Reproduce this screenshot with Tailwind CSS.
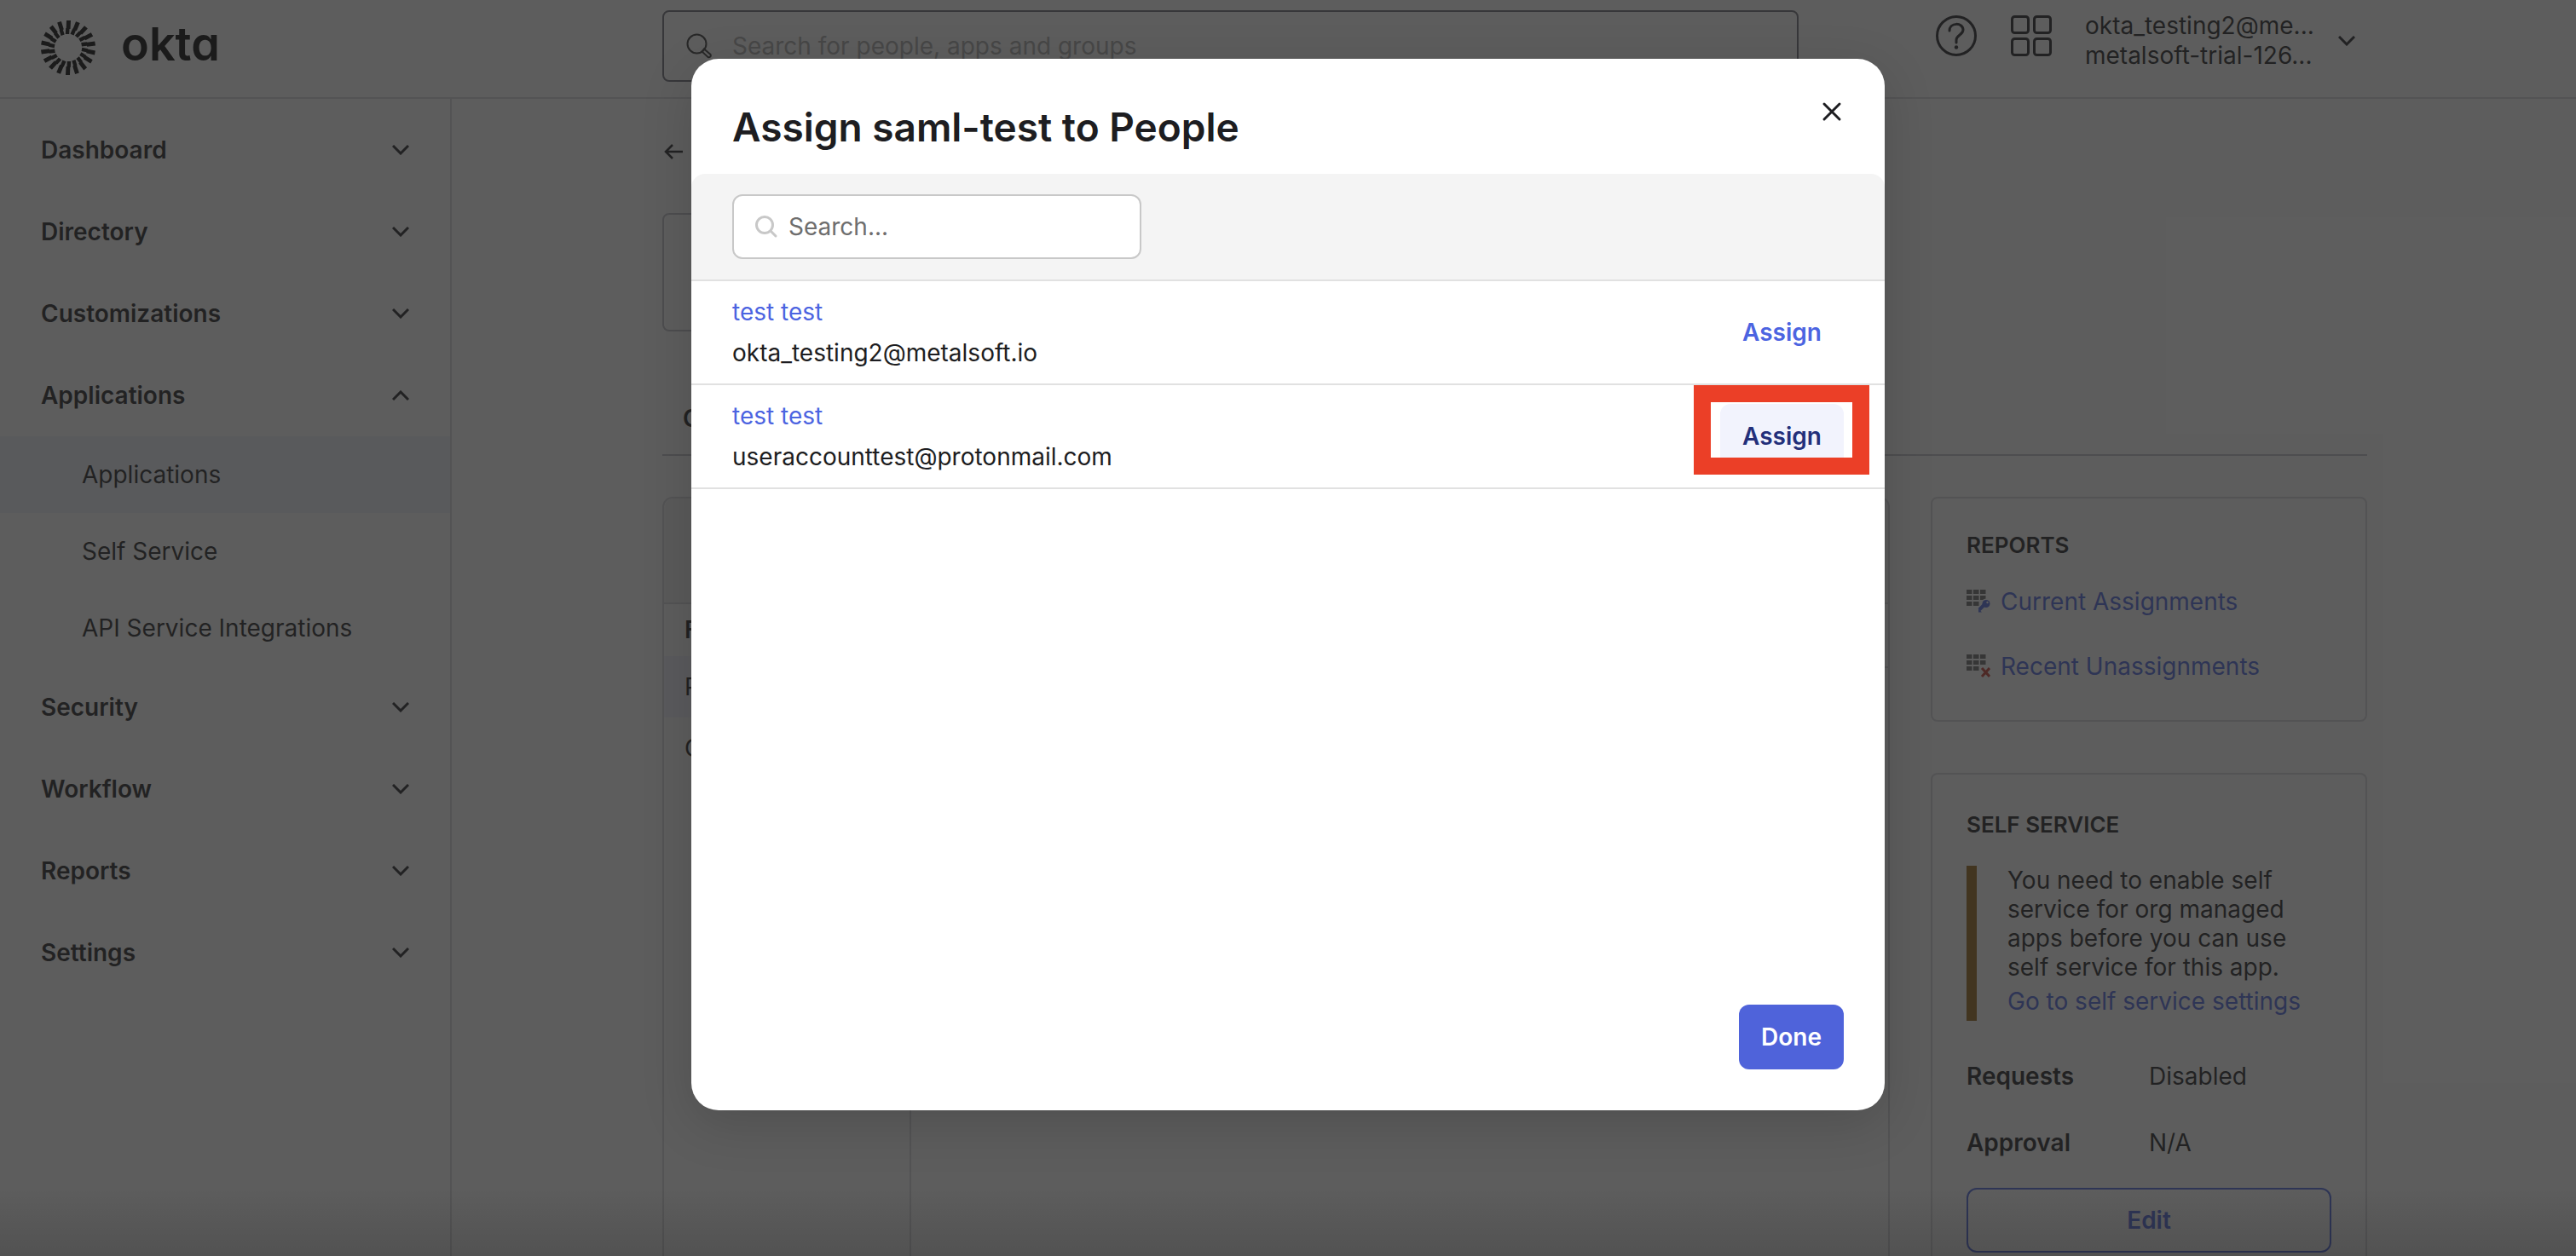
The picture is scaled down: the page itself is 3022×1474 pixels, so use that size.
<!DOCTYPE html>
<html lang="en">
<head>
<meta charset="utf-8">
<title>Okta Admin - Assign saml-test to People</title>
<script src="https://cdn.jsdelivr.net/npm/@tailwindcss/browser@4"></script>
</head>
<body class="relative h-screen overflow-hidden bg-white font-['Inter',sans-serif] text-[28px] leading-[34px] text-[#1d1d21]">
<svg class="hidden">
  <symbol id="down" viewBox="0 0 20 12"><path d="M1 1l9 9 9-9" fill="none" stroke="currentColor" stroke-width="3"/></symbol>
  <symbol id="grid" viewBox="0 0 28 28"><path d="M0 0h6.500v5H0zM8 0h6.500v5H8zM16 0h6.500v5H16zM0 7h6.500v5H0zM8 7h6.500v5H8zM16 7h6.500v5H16zM0 14h6.500v5H0zM8 14h6.500v5H8z" fill="#6a6a6a"/></symbol>
</svg>
<div class="flex h-full flex-col overflow-hidden">
  <header class="flex h-[116px] shrink-0 items-start border-b-2 border-[#d7d7dc]">
    <a href="#" class="flex w-[777px] shrink-0 items-center gap-[30px] pt-[22px] pl-12 text-black" aria-label="okta">
      <svg id="mark" class="h-16 w-16" viewBox="-32 -32 64 64" fill="currentColor"></svg>
      <span class="pb-2 font-['Inter',sans-serif] text-[54px] leading-[60px] font-semibold [font-feature-settings:'cv11']">okta</span>
    </a>
    <label class="mt-3 flex h-[84px] min-w-0 flex-1 items-center rounded-lg border-2 border-[#6e6e78] pl-[26px]">
      <svg class="mr-6 h-[30px] w-[30px] shrink-0 text-[#333]" viewBox="0 0 30 30" fill="none" stroke="currentColor" stroke-width="2"><circle cx="12.500" cy="12.500" r="11"/><path d="M18.500 21.500l2.500-3 7.500 6.500c1 2-1 4-3 3z"/></svg>
      <input class="w-full outline-none placeholder:text-[#aaa]" placeholder="Search for people, apps and groups" aria-label="Search for people, apps and groups">
    </label>
    <div class="flex w-[912px] shrink-0 items-start pt-[5px] pl-[161px]">
      <button class="mt-[13px] mr-10" aria-label="Help"><svg class="h-12 w-12" viewBox="0 0 48 48" fill="none" stroke="currentColor" stroke-width="3"><circle cx="24" cy="24" r="22.500"/><path d="M16 18c0-10 16-10 16-1 0 6-8 6-8 12v3" stroke-linecap="round"/><circle cx="24" cy="37.500" r="2.200" fill="currentColor" stroke="none"/></svg></button>
      <button class="mt-[13px] mr-[39px]" aria-label="Apps"><svg class="h-12 w-12" viewBox="0 0 48 48" fill="none" stroke="currentColor" stroke-width="3"><rect x="1.500" y="1.500" width="19" height="19" rx="3"/><rect x="27.500" y="1.500" width="19" height="19" rx="3"/><rect x="1.500" y="27.500" width="19" height="19" rx="3"/><rect x="27.500" y="27.500" width="19" height="19" rx="3"/></svg></button>
      <button class="flex items-center gap-7 pt-2 text-left leading-[35px]"><span>okta_testing2@me...<br>metalsoft-trial-126...</span><svg class="h-3 w-5"><use href="#down"/></svg></button>
    </div>
  </header>
  <div class="flex min-h-0 flex-1">
    <nav class="w-[530px] shrink-0 border-r-2 border-[#d7d7dc] pt-3 font-semibold">
      <button class="flex h-24 w-full items-center justify-between pr-12 pl-12">Dashboard<svg class="h-3 w-5"><use href="#down"/></svg></button>
      <button class="flex h-24 w-full items-center justify-between pr-12 pl-12">Directory<svg class="h-3 w-5"><use href="#down"/></svg></button>
      <button class="flex h-24 w-full items-center justify-between pr-12 pl-12">Customizations<svg class="h-3 w-5"><use href="#down"/></svg></button>
      <button class="flex h-24 w-full items-center justify-between pr-12 pl-12">Applications<svg class="h-3 w-5 rotate-180"><use href="#down"/></svg></button>
      <a href="#" class="flex h-[90px] items-center bg-[#f0f3fa] pl-24 font-normal">Applications</a>
      <a href="#" class="flex h-[90px] items-center pl-24 font-normal">Self Service</a>
      <a href="#" class="flex h-[90px] items-center pl-24 font-normal">API Service Integrations</a>
      <button class="flex h-24 w-full items-center justify-between pr-12 pl-12">Security<svg class="h-3 w-5"><use href="#down"/></svg></button>
      <button class="flex h-24 w-full items-center justify-between pr-12 pl-12">Workflow<svg class="h-3 w-5"><use href="#down"/></svg></button>
      <button class="flex h-24 w-full items-center justify-between pr-12 pl-12">Reports<svg class="h-3 w-5"><use href="#down"/></svg></button>
      <button class="flex h-24 w-full items-center justify-between pr-12 pl-12">Settings<svg class="h-3 w-5"><use href="#down"/></svg></button>
    </nav>
    <main class="flex min-w-0 flex-1 flex-col pr-[245px] pl-[247px]">
      <a href="#" class="mt-[53px] ml-0.5 w-6" aria-label="Back"><svg class="h-[18px] w-[22px]" viewBox="0 0 22 18" fill="none" stroke="currentColor" stroke-width="2.500"><path d="M22 9H2M10 1L2 9l8 8"/></svg></a>
      <div class="mt-[63px] h-[139px] w-36 shrink-0 rounded-lg border-2 border-[#c1c1c8]"></div>
      <div class="mt-[67px] h-[79px] shrink-0 border-b-2 border-[#c1c1c8] pt-[18px] pl-6 font-semibold">General</div>
      <div class="mt-12 flex min-h-0 flex-1 gap-12">
        <section class="flex min-w-0 flex-1 flex-col rounded-t-xl border-2 border-b-0 border-[#d7d7dc]">
          <div class="h-[124px] shrink-0 rounded-t-xl border-b-2 border-[#d7d7dc] bg-[#f4f4f4]"></div>
          <div class="flex flex-1">
            <div class="w-[290px] border-r-2 border-[#d7d7dc]">
              <div class="h-[61px] pt-[13px] pl-6 font-semibold">Filters</div>
              <a href="#" class="flex h-[72px] items-center bg-[#f2f3fd] pl-6">People</a>
              <a href="#" class="flex h-[72px] items-center pl-6">Groups</a>
            </div>
            <div class="h-[75px] flex-1 border-b-2 border-[#d7d7dc]"></div>
          </div>
        </section>
        <aside class="flex w-[512px] shrink-0 flex-col gap-[60px]">
          <section class="h-[264px] shrink-0 rounded-lg border-2 border-[#d7d7dc] px-10 pt-[38px]">
            <h2 class="text-[26px] font-semibold">REPORTS</h2>
            <a href="#" class="mt-8 flex items-center gap-3 text-[#4c64e1]"><svg class="h-7 w-7" viewBox="0 0 28 28"><use href="#grid"/><circle cx="23" cy="16.500" r="6" fill="#fff"/><path d="M15 23.500l7-7" stroke="#4c64e1" stroke-width="4"/><path d="M14 22.500v4h4z" fill="#4c64e1"/><circle cx="23" cy="16.500" r="4.500" fill="#4c64e1"/><circle cx="24.500" cy="15" r="1.200" fill="#fff"/></svg>Current Assignments</a>
            <a href="#" class="mt-[42px] flex items-center gap-3 text-[#4c64e1]"><svg class="h-7 w-7" viewBox="0 0 28 28"><use href="#grid"/><path d="M18 16l9 10M27 16l-9 10" stroke="#c0392b" stroke-width="3"/></svg>Recent Unassignments</a>
          </section>
          <section class="min-h-0 flex-1 overflow-hidden rounded-t-lg border-2 border-b-0 border-[#d7d7dc] px-10 pt-[42px]">
            <h2 class="text-[26px] font-semibold">SELF SERVICE</h2>
            <div class="mt-[31px] h-[182px] border-l-12 border-[#966514] pl-[36px]">You need to enable self service for org managed apps before you can use self service for this app.<a href="#" class="mt-1.5 block whitespace-nowrap text-[#4c64e1]">Go to self service settings</a></div>
            <dl class="mt-12 grid grid-cols-2 gap-y-11">
              <dt class="font-semibold">Requests</dt><dd>Disabled</dd>
              <dt class="font-semibold">Approval</dt><dd>N/A</dd>
            </dl>
            <button class="mt-9 h-[76px] w-full rounded-xl border-2 border-[#4c64e1] font-semibold text-[#4c64e1]">Edit</button>
          </section>
        </aside>
      </div>
    </main>
  </div>
</div>

<div class="absolute inset-0 flex items-start justify-center bg-[#252525]/74 pt-[69px]">
  <div class="absolute inset-x-0 bottom-0 h-20 bg-linear-to-t from-black/12 to-transparent"></div>
  <div role="dialog" aria-labelledby="title" class="relative flex h-[1234px] w-[1400px] flex-col rounded-[32px] bg-white shadow-[0_16px_60px_rgba(0,0,0,0.15)]">
    <div class="flex h-[135px] shrink-0 items-start justify-between pr-[50px] pl-12">
      <h1 id="title" class="pt-[52px] text-[46px] leading-[56px] font-semibold">Assign saml-test to People</h1>
      <button class="mt-[50px]" aria-label="Close"><svg class="h-6 w-6" viewBox="0 0 24 24" fill="none" stroke="currentColor" stroke-width="3" stroke-linecap="round"><path d="M3 3l18 18M21 3L3 21"/></svg></button>
    </div>
    <div class="flex h-[126px] shrink-0 items-center rounded-t-2xl border-b-2 border-[#e1e1e1] bg-[#f4f4f4] px-12">
      <label class="flex h-[76px] w-[480px] items-center gap-3 rounded-xl border-2 border-[#c8c8c8] bg-white px-6">
        <svg class="h-7 w-7 shrink-0" viewBox="0 0 28 28" fill="none" stroke="#c8c8c8" stroke-width="3" stroke-linecap="round"><circle cx="12" cy="12" r="9.500"/><path d="M19 19l6 6"/></svg>
        <input class="w-full outline-none placeholder:text-[#6e6e6e]" placeholder="Search..." aria-label="Search people">
      </label>
    </div>
    <ul class="flex-1">
      <li class="flex h-[122px] items-center justify-between border-b-2 border-[#e1e1e1] px-12 leading-[48px]">
        <div><a href="#" class="block text-[#4c64e1]">test test</a><p>okta_testing2@metalsoft.io</p></div>
        <button class="h-[76px] w-[145px] rounded-xl font-semibold text-[#4c64e1]">Assign</button>
      </li>
      <li class="relative flex h-[122px] items-center justify-between border-b-2 border-[#e1e1e1] px-12 leading-[48px]">
        <div><a href="#" class="block text-[#4c64e1]">test test</a><p>useraccounttest@protonmail.com</p></div>
        <button class="h-[76px] w-[145px] rounded-xl bg-[#f2f3fd] font-semibold text-[#232f7a]">Assign</button>
        <div class="absolute top-0 right-[18px] h-[105px] w-[206px] border-20 border-[#eb3f27]"></div>
      </li>
    </ul>
    <div class="flex justify-end px-12 pb-12"><button class="h-[76px] w-[123px] rounded-xl bg-[#4f63da] font-semibold text-white">Done</button></div>
  </div>
</div>
<script>
  // Rays of the logo mark: each is a stepped bar, turned around the centre.
  const mark = document.getElementById('mark');
  const n = 18;
  let rays = '';
  for (let i = 0; i < n; i++) rays += `<path transform="rotate(${i * 360 / n})" d="M-2-32h5l-.5 10h-1l-.3 6h-4.400l.4-7h.5z"/>`;
  mark.innerHTML = rays;
</script>
</body>
</html>
